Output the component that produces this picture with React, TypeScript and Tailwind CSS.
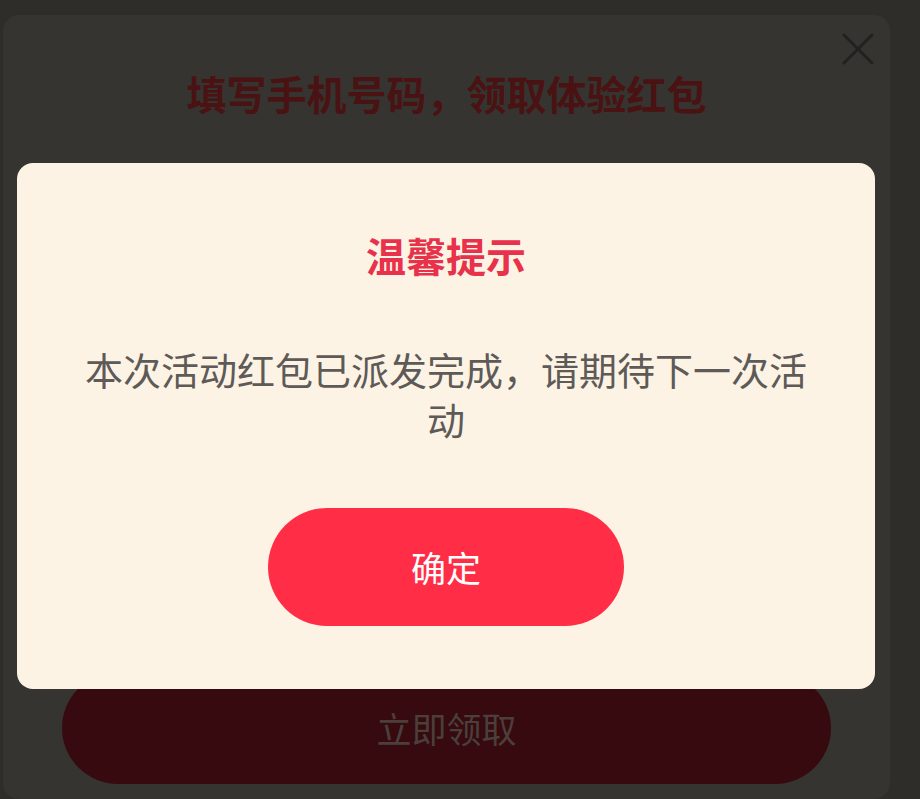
export default function App() {
    return (
        <div
            className="relative h-[799px] w-full overflow-hidden bg-[#2e2d2a] pt-[15px] pl-[3px] pr-[30px]"
            style={{ fontFamily: '"Noto Sans CJK SC", "Noto Sans", sans-serif' }}
        >
            {/* Page under the dim layer */}
            <div className="relative h-full rounded-[16px] bg-[#353430] px-[59px] pt-[54px]">
                <button className="absolute right-[16px] top-[18px] text-[#222120]">
                    <svg width="32" height="32" viewBox="0 0 32 32" fill="none" stroke="currentColor" strokeWidth="3" strokeLinecap="round">
                        <path d="M2 2 L30 30 M30 2 L2 30" />
                    </svg>
                </button>

                <h1 className="text-center text-[40px] font-bold leading-[48px] text-[#4a1213]">
                    填写手机号码，领取体验红包
                </h1>

                <button className="mt-[555px] flex h-[112px] w-full items-center justify-center rounded-full bg-[#360a0e] text-[35px] text-[#4b3f3c]">
                    立即领取
                </button>
            </div>

            {/* Notice dialog */}
            <div className="absolute inset-0 pt-[163px] pl-[17px] pr-[45px]">
                <div className="flex flex-col items-center rounded-[16px] bg-[#fdf3e5] px-[59px] pt-[72px] pb-[63px]">
                    <h2 className="text-center text-[40px] font-bold leading-[40px] text-[#e8314a]">
                        温馨提示
                    </h2>
                    <p className="mt-[69px] text-center text-[38px] leading-[50px] text-[#5e5a57]">
                        本次活动红包已派发完成，请期待下一次活动
                    </p>
                    <button className="mt-[64px] flex h-[118px] w-[356px] items-center justify-center rounded-full bg-[#ff2d45] text-[35px] text-white">
                        确定
                    </button>
                </div>
            </div>
        </div>
    );
}
